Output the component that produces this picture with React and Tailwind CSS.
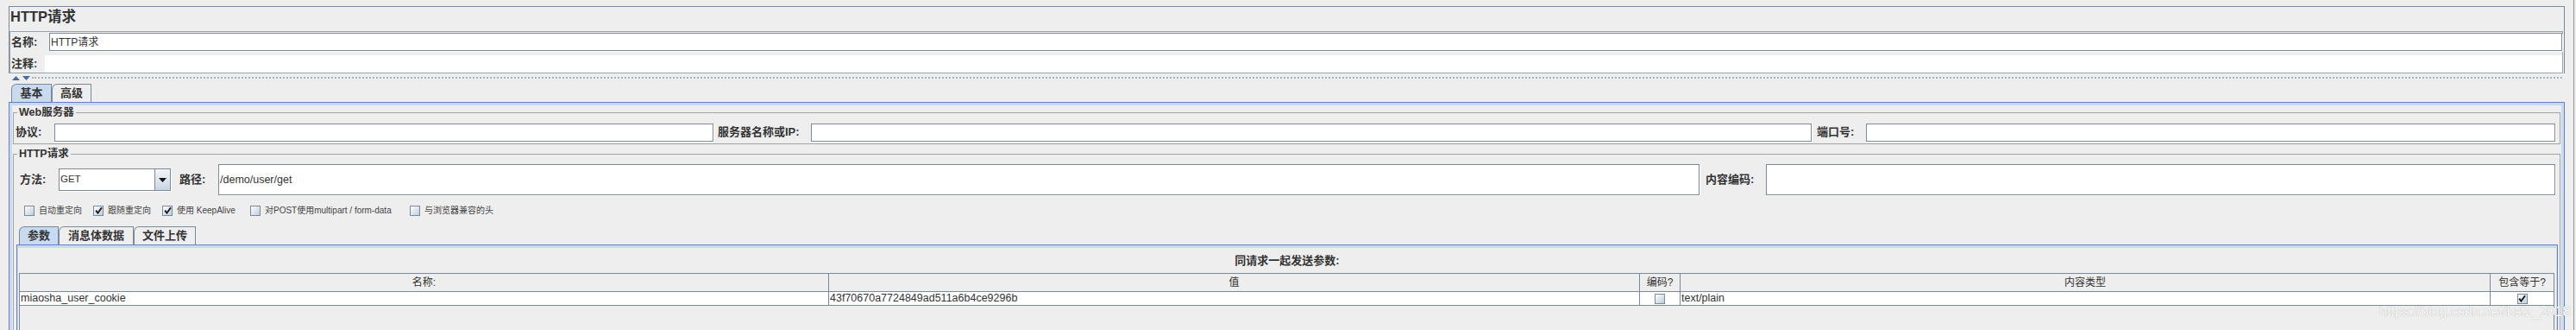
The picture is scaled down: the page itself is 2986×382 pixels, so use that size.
// JMeter "HTTP请求" sampler panel

function Field({ className = '', children }) {
  return (
    <div className={`bg-white border border-[#7a8a99] shadow-[1px_1px_0_#ffffff] flex items-center overflow-hidden whitespace-nowrap ${className}`}>
      {children}
    </div>
  )
}

function Label({ className = '', children }) {
  return <span className={`text-[13px] font-bold whitespace-nowrap shrink-0 ${className}`}>{children}</span>
}

function Check({ checked }) {
  return (
    <span className="w-[12px] h-[12px] shrink-0 border border-[#7a8a99] bg-linear-to-br from-[#ffffff] to-[#c0cddb] flex items-center justify-center">
      {checked && (
        <svg width="9" height="9" viewBox="0 0 9 9">
          <path d="M1.2 4.6 L3.4 7.6 L8 1.2" fill="none" stroke="#1c1c1c" strokeWidth="1.9" />
        </svg>
      )}
    </span>
  )
}

function Tab({ active, className = '', children }) {
  return (
    <div
      className={`h-[21px] flex items-center justify-center border border-b-0 border-[#7a8a99] rounded-tl-[6px] text-[13px] font-bold ${active ? 'bg-[#c8daf0]' : 'bg-[#eeeeee]'} ${className}`}
    >
      {children}
    </div>
  )
}

function CheckItem({ checked, className = '', children }) {
  return (
    <div className={`flex items-center shrink-0 ${className}`}>
      <Check checked={checked} />
      <span className="ml-[5px] text-[10px] text-[#444444] whitespace-nowrap">{children}</span>
    </div>
  )
}

const cols = 'grid grid-cols-[938px_940px_47px_939px_1fr]'

export default function App() {
  return (
    <div className="relative w-[2986px] h-[382px] overflow-hidden bg-[#eeeeee] text-[#333333] font-['Liberation_Sans','Noto_Sans_CJK_SC',sans-serif]">
      <div className="h-full w-[2984px] border-r border-[#8d959e] pt-[7px] pl-[10px]">
        {/* title + name/comment */}
        <div className="w-[2963px] border-t border-l border-r border-[#7a8a99]">
          <div className="h-[28px] pl-[1px] text-[16.5px] font-bold leading-[22px]">HTTP请求</div>
          <div className="w-[2960px] h-[49px] border border-[#9aa3ad]">
            <div className="flex items-center h-[21px] mt-[1px]">
              <Label className="w-[45px] pl-[1px]">名称:</Label>
              <Field className="flex-1 h-[21px] text-[12px] pl-[1px]">HTTP请求</Field>
            </div>
            <div className="flex items-center h-[20px] mt-[5px]">
              <Label className="w-[40px] pl-[1px]">注释:</Label>
              <div className="flex-1 h-full bg-white" />
            </div>
          </div>
        </div>

        {/* splitter */}
        <div className="h-[11px] pt-[2px]">
          <div className="flex items-center h-[6px] pl-[4px] w-[2960px]">
            <svg width="9" height="5" viewBox="0 0 9 5"><path d="M0 5 L4.5 0 L9 5 Z" fill="#4a6aa0" /></svg>
            <svg width="9" height="5" viewBox="0 0 9 5" className="ml-[3px]"><path d="M0 0 L4.5 5 L9 0 Z" fill="#4a6aa0" /></svg>
            <div className="flex-1 ml-[2px] border-t-2 border-dotted border-[#a9b2bc]" />
          </div>
        </div>

        {/* main tabs */}
        <div className="h-[22px] pl-[3px] flex items-end">
          <Tab active className="w-[47px]">基本</Tab>
          <Tab className="w-[46px]">高级</Tab>
        </div>

        <div className="w-[2963px] h-[264px] border-t border-l border-r border-[#6382bf]">
          <div className="h-full border-t-[3px] border-l-[3px] border-r-[3px] border-[#c8daf0]">
            {/* Web服务器 */}
            <fieldset className="mt-[2px] mx-[1px] border border-[#a3a3a3] pb-[2px]">
              <legend className="ml-[4px] px-[2px] text-[12.5px] font-bold leading-[13px]">Web服务器</legend>
              <div className="flex items-center h-[22px] mt-[5px] pl-[2px] pr-[5px]">
                <Label className="w-[45px]">协议:</Label>
                <Field className="w-[764px] h-[21px]" />
                <Label className="w-[113px] pl-[5px]">服务器名称或IP:</Label>
                <Field className="w-[1160px] h-[21px]" />
                <Label className="w-[63px] pl-[6px]">端口号:</Label>
                <Field className="flex-1 h-[21px]" />
              </div>
            </fieldset>

            {/* HTTP请求 */}
            <fieldset className="mt-[5px] mx-[1px] h-[230px] border border-[#a3a3a3]">
              <legend className="ml-[4px] px-[2px] text-[12.5px] font-bold leading-[13px]">HTTP请求</legend>
              <div className="flex items-center h-[36px] mt-[5px] pl-[7px] pr-[5px]">
                <Label className="w-[45px]">方法:</Label>
                <div className="w-[130px] h-[26px] border border-[#7a8a99] bg-white flex shadow-[1px_1px_0_#ffffff]">
                  <div className="flex-1 flex items-center pl-[1px] text-[11.5px]">GET</div>
                  <div className="w-[18px] border-l border-[#7a8a99] bg-linear-to-b from-[#f3f6f9] to-[#c9d5e2] flex items-center justify-center">
                    <svg width="9" height="5" viewBox="0 0 9 5"><path d="M0 0 L9 0 L4.5 5 Z" fill="#111111" /></svg>
                  </div>
                </div>
                <Label className="ml-[10px] w-[45px]">路径:</Label>
                <Field className="w-[1717px] h-[36px] text-[12.5px] pl-[1px]">/demo/user/get</Field>
                <Label className="w-[77px] pl-[7px]">内容编码:</Label>
                <Field className="flex-1 h-[36px]" />
              </div>

              <div className="flex items-center h-[13px] mt-[11px] pl-[12px]">
                <CheckItem className="w-[80px]">自动重定向</CheckItem>
                <CheckItem checked className="w-[80px]">跟随重定向</CheckItem>
                <CheckItem checked className="w-[102px]">使用 KeepAlive</CheckItem>
                <CheckItem className="w-[185px]">对POST使用multipart / form-data</CheckItem>
                <CheckItem>与浏览器兼容的头</CheckItem>
              </div>

              {/* sub tabs */}
              <div className="h-[21px] mt-[12px] pl-[6px] flex items-end">
                <Tab active className="w-[46px]">参数</Tab>
                <Tab className="w-[87px]">消息体数据</Tab>
                <Tab className="w-[72px]">文件上传</Tab>
              </div>

              <div className="ml-[3px] mr-[2px] h-[120px] border-t border-l border-r border-[#6382bf]">
                <div className="h-full border-t-[3px] border-l border-r border-[#c8daf0]">
                  <div className="h-[29px] flex items-center justify-center text-[13px] font-bold">同请求一起发送参数:</div>
                  <div className="ml-[1px] mr-[2px] h-[90px] border-t border-l border-r border-[#7a8a99]">
                    <div className={`${cols} h-[21px] border-b border-[#7a8a99] text-[12px]`}>
                      <div className="flex items-center justify-center border-r border-[#7a8a99]">名称:</div>
                      <div className="flex items-center justify-center border-r border-[#7a8a99]">值</div>
                      <div className="flex items-center justify-center border-r border-[#7a8a99]">编码?</div>
                      <div className="flex items-center justify-center border-r border-[#7a8a99]">内容类型</div>
                      <div className="flex items-center justify-center">包含等于?</div>
                    </div>
                    <div className={`${cols} h-[16px] bg-white border-b border-[#7a8a99] text-[12.5px] leading-[15px]`}>
                      <div className="pl-[1px] border-r border-[#7a8a99] whitespace-nowrap">miaosha_user_cookie</div>
                      <div className="pl-[1px] border-r border-[#7a8a99] whitespace-nowrap">43f70670a7724849ad511a6b4ce9296b</div>
                      <div className="flex items-center justify-center border-r border-[#7a8a99]"><Check /></div>
                      <div className="pl-[1px] border-r border-[#7a8a99] whitespace-nowrap">text/plain</div>
                      <div className="flex items-center justify-center"><Check checked /></div>
                    </div>
                  </div>
                </div>
              </div>
            </fieldset>
          </div>
        </div>
      </div>

      {/* watermark */}
      <div className="absolute left-[2758px] top-[352px] text-[16px] leading-[18px] text-[#fbfbfb] [text-shadow:0_0_1px_#9a9a9a] whitespace-nowrap">
        https://blog.csdn.net/bsfz_2018
      </div>
    </div>
  )
}
